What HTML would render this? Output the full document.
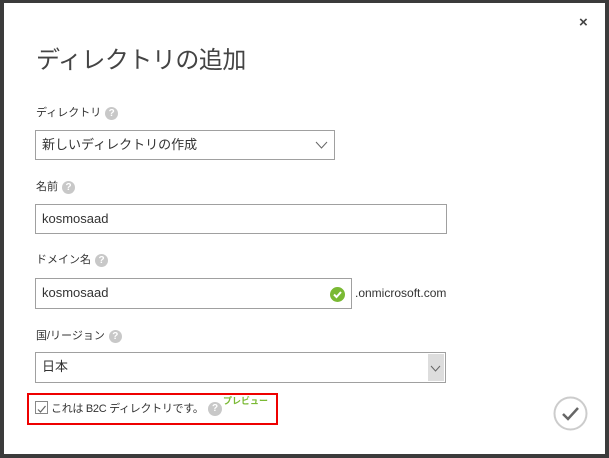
<!DOCTYPE html>
<html><head><meta charset="utf-8"><style>
body{margin:0;width:609px;height:458px;background:#3b3b3b;position:relative;overflow:hidden;font-family:"Segoe UI","Liberation Sans","Noto Sans CJK JP",sans-serif;color:#333}
.panel{position:absolute;left:4px;top:3px;width:601px;height:451px;background:#fff}
.a{position:absolute}
.lbl{font-size:11px;color:#333}
.q{display:inline-block;width:13px;height:13px;border-radius:50%;background:#c8c8c8;color:#fff;font-size:10px;font-weight:bold;text-align:center;line-height:13px;vertical-align:middle;margin-left:4px}
.box{position:absolute;border:1px solid #a0a0a0;background:#fff;box-sizing:border-box;font-size:13px;line-height:28px;padding-left:6px}
</style></head><body>
<div class="panel"></div>
<div class="a" style="left:579px;top:14px;font-size:15px;font-weight:bold;color:#444">×</div>
<div class="a" style="left:36px;top:40px;font-size:24px;color:#444;letter-spacing:-0.5px">ディレクトリの追加</div>
<div class="a lbl" style="left:36px;top:104px">ディレクトリ<span class="q">?</span></div>
<div class="box" style="left:35px;top:130px;width:300px;height:30px">新しいディレクトリの作成
<svg class="a" style="right:6px;top:10px" width="13" height="8"><path d="M1 1L6.5 7L12 1" fill="none" stroke="#666"/></svg></div>
<div class="a lbl" style="left:36px;top:178px">名前<span class="q">?</span></div>
<div class="box" style="left:35px;top:204px;width:412px;height:30px">kosmosaad</div>
<div class="a lbl" style="left:36px;top:251px">ドメイン名<span class="q">?</span></div>
<div class="box" style="left:35px;top:278px;width:317px;height:31px">kosmosaad
<svg class="a" style="left:294px;top:8px" width="15" height="15"><circle cx="7.5" cy="7.5" r="7.5" fill="#7ab934"/><path d="M4 7.5L6.5 10L11 5" fill="none" stroke="#fff" stroke-width="2"/></svg></div>
<div class="a" style="left:355px;top:286px;font-size:12px;color:#333">.onmicrosoft.com</div>
<div class="a lbl" style="left:36px;top:327px">国/リージョン<span class="q">?</span></div>
<div class="box" style="left:35px;top:352px;width:411px;height:31px">日本
<div class="a" style="right:1px;top:1px;width:16px;height:27px;background:#ddd"></div>
<svg class="a" style="right:4px;top:12px" width="11" height="7"><path d="M1 1L5.5 6L10 1" fill="none" stroke="#666"/></svg></div>
<div class="a" style="left:27px;top:393px;width:247px;height:28px;border:2px solid #e00"></div>
<div class="a" style="left:35px;top:401px;width:11px;height:11px;border:1px solid #888"><svg width="11" height="11"><path d="M2 5.5L4.5 8L9.5 2" fill="none" stroke="#666" stroke-width="1.2"/></svg></div>
<div class="a" style="left:51px;top:400px;font-size:11px;color:#333;letter-spacing:-0.3px">これは B2C ディレクトリです。</div>
<div class="a" style="left:208px;top:400px"><span class="q" style="width:14px;height:14px;line-height:14px;margin:0">?</span></div>
<div class="a" style="left:223px;top:394px;font-size:9px;color:#7ab934;font-weight:bold">プレビュー</div>
<svg class="a" style="left:553px;top:396px" width="35" height="35"><circle cx="17.5" cy="17.5" r="16" fill="none" stroke="#ccc" stroke-width="2"/><path d="M10 18L15 23L25 12" fill="none" stroke="#666" stroke-width="2.5"/></svg>
</body></html>
